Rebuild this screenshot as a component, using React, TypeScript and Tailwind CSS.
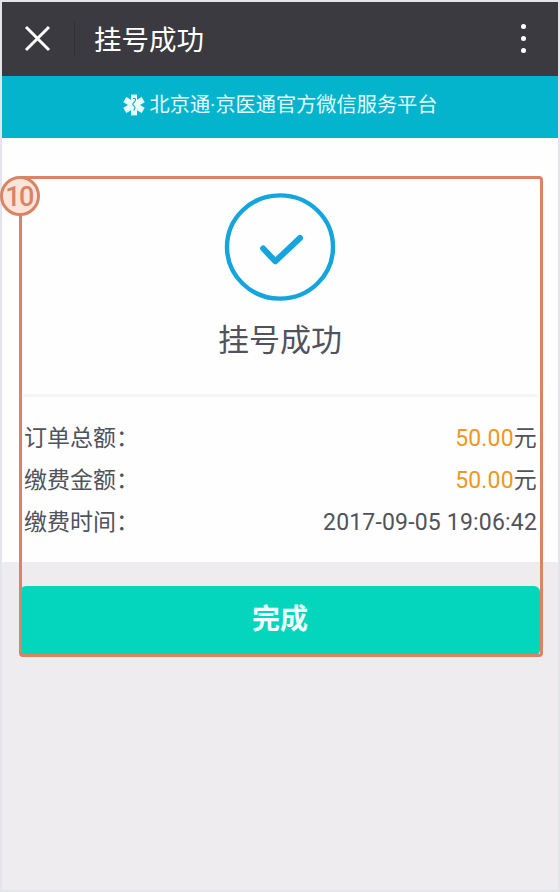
const orderRows = [
  { label: '订单总额：', amount: '50.00', value: '元' },
  { label: '缴费金额：', amount: '50.00', value: '元' },
  { label: '缴费时间：', value: '2017-09-05 19:06:42' },
];

function StarOfLife() {
  return (
    <svg width="22" height="22" viewBox="0 0 22 22" fill="none">
      <g stroke="#e9fdff" strokeWidth="6">
        <path d="M11 .6v20.8" />
        <path d="M1.8 5.7l18.4 10.6" />
        <path d="M20.2 5.7L1.8 16.3" />
      </g>
      <path d="M9.8 4.6c1.6-1 3.2.2 2.6 1.8-.5 1.7-2.6 2-2.6 3.8 0 1.6 2.6 1.8 2.2 3.6-.2 1.2-1 1.4-1 3" stroke="#15a9bd" strokeWidth="1.1" />
    </svg>
  );
}

function Header() {
  return (
    <header className="flex h-[74px] shrink-0 items-center bg-[#3b3a40] text-white">
      <svg className="ml-[22px]" width="28" height="28" viewBox="0 0 28 28" stroke="currentColor" strokeWidth="3">
        <path d="M2 2l23 23M25 2l-23 23" />
      </svg>
      <div className="ml-[22px] h-9 w-px bg-[#323137]" />
      <h1 className="ml-[19px] pt-[3px] text-[27.5px] leading-none">挂号成功</h1>
      <div className="mr-[32px] mb-px ml-auto flex flex-col gap-[7px]">
        <span className="size-[5px] rounded-full bg-white" />
        <span className="size-[5px] rounded-full bg-white" />
        <span className="size-[5px] rounded-full bg-white" />
      </div>
    </header>
  );
}

function Result() {
  return (
    <section className="flex flex-col items-center">
      <svg width="112" height="110" viewBox="0 0 112 110" fill="none" stroke="#13a5dc">
        <ellipse cx="56" cy="55" rx="53" ry="51.6" strokeWidth="4.4" />
        <path d="M39.2 56.5L51.3 69.3L76 46" strokeWidth="6" strokeLinecap="round" strokeLinejoin="round" />
      </svg>
      <h2 className="mt-[16px] text-[31px] leading-[46px]">挂号成功</h2>
    </section>
  );
}

export default function App() {
  return (
    <div className="flex h-[892px] w-[560px] flex-col border-2 border-[#e4e4eb] bg-[#eeecee] font-[Roboto,'Noto_Sans_CJK_SC',sans-serif] text-[#50525c]">
      <Header />
      <div className="flex h-[62px] shrink-0 items-center justify-center gap-[5px] bg-[#04b4cc] pb-1 text-[#e3fcff]">
        <StarOfLife />
        <p className="pt-px text-[20.2px] leading-none">北京通·京医通官方微信服务平台</p>
      </div>
      <main className="relative flex flex-col">
        <div className="flex h-[424px] flex-col bg-[#fefefe] px-[21px] pt-[54px]">
          <Result />
          <dl className="mt-[30px] flex flex-col border-t-[3px] border-[#f6f5f6] pt-[21px] text-[23px] leading-[42px]">
            {orderRows.map((row) => (
              <div className="flex justify-between" key={row.label}>
                <dt className="pl-px">{row.label}</dt>
                <dd className="tracking-[0.18px]">
                  {row.amount && <span className="text-[#ee981f]">{row.amount}</span>}
                  {row.value}
                </dd>
              </div>
            ))}
          </dl>
        </div>
        <button className="mx-[18px] mt-6 h-[70px] rounded-md bg-[#03d6bd] pb-0.5 text-[28px] font-bold text-[#f0fffc]">完成</button>

        {/* step marker laid over the page */}
        <div className="pointer-events-none absolute top-[38px] left-[17px] h-[481px] w-[524px] rounded-[4px] border-[3px] border-[#d98463]" />
        <div className="absolute top-[38px] -left-0.5 flex size-10 items-center justify-center rounded-full border-[3px] border-[#d98463] bg-[#fde4da] pt-0.5 pr-0.5 text-[27px] font-medium tracking-[-1.5px] text-[#d98463]">
          10
        </div>
      </main>
    </div>
  );
}
